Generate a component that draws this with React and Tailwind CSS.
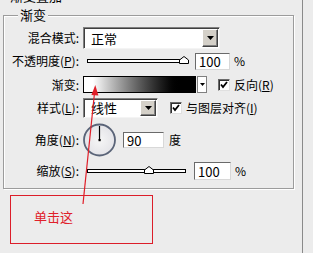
import React from "react";

function DropBtn({ w = "w-[16px]" }) {
  return (
    <div className={`${w} h-full bg-[#d4d0c8] border border-t-white border-l-white border-r-[#404040] border-b-[#404040] shadow-[inset_-1px_-1px_0_#808080] flex items-center justify-center`}>
      <svg width="7" height="4" viewBox="0 0 7 4"><polygon points="0,0 7,0 3.5,4" fill="#000" /></svg>
    </div>
  );
}

function Select({ w, h, text }) {
  return (
    <div className={`${w} ${h} bg-white border border-t-[#808080] border-l-[#808080] border-r-[#f4f4f4] border-b-[#f4f4f4] shadow-[inset_1px_1px_0_#404040] flex items-stretch p-[1px]`}>
      <div className="flex-1 pl-[6px] flex items-center leading-none text-[13px]">{text}</div>
      <DropBtn />
    </div>
  );
}

function Input({ w, h, text }) {
  return (
    <div className={`${w} ${h} bg-white border border-t-[#6a6a6a] border-l-[#6a6a6a] border-r-[#d8d8d8] border-b-[#d8d8d8] flex items-center pl-[3px] leading-none text-[13px]`}>
      {text}
    </div>
  );
}

function Slider({ thumb }) {
  return (
    <div className="relative w-[104px] h-[16px] flex items-center">
      <div className="ml-[4px] w-[99px] h-[4px] border border-black bg-white" />
      <svg className="absolute top-[3px]" style={{ left: thumb }} width="10" height="8" viewBox="0 0 10 8">
        <polygon points="0.5,7.5 0.5,4 5,0.5 9.5,4 9.5,7.5" fill="#fff" stroke="#000" strokeWidth="1" />
      </svg>
    </div>
  );
}

function Check() {
  return (
    <div className="w-[12px] h-[12px] bg-white border border-t-[#6a6a6a] border-l-[#6a6a6a] border-r-[#e0e0e0] border-b-[#e0e0e0] shadow-[inset_1px_1px_0_#303030] flex items-center justify-center">
      <svg width="8" height="8" viewBox="0 0 8 8"><polyline points="1,3.5 3,6 7,1" fill="none" stroke="#000" strokeWidth="1.8" /></svg>
    </div>
  );
}

function Label({ children }) {
  return <div className="w-[75px] text-right whitespace-nowrap leading-none text-[12px]">{children}</div>;
}

export default function App() {
  return (
    <div className="w-[313px] h-[253px] bg-[#ececec] relative overflow-hidden font-['SimSun','Noto_Sans_CJK_SC',sans-serif] text-black">
      <div className="w-[303px] h-full border-r border-[#8a8a8a] flex flex-col">
        <div className="ml-[10px] -mt-[10px] h-[12px] leading-[12px] text-[13px]">渐变叠加</div>
        <div className="relative mt-[13px] ml-[3px] w-[291px] h-[174px] border border-[#9c9c9c] shadow-[inset_1px_1px_0_#fff,1px_1px_0_#fff] pt-[11px]">
          <span className="absolute left-[14px] top-[-9px] px-[2px] bg-[#ececec] text-[13px] leading-[16px]">渐变</span>

          <div className="flex items-center h-[22px]">
            <Label>混合模式:</Label>
            <div className="ml-[4px]"><Select w="w-[137px]" h="h-[22px]" text="正常" /></div>
          </div>

          <div className="flex items-center h-[24px]">
            <Label>不透明度(<span className="underline">P</span>):</Label>
            <div className="ml-[4px]"><Slider thumb="96px" /></div>
            <div className="ml-[8px]"><Input w="w-[35px]" h="h-[17px]" text="100" /></div>
            <div className="ml-[4px] text-[12px] leading-none">%</div>
          </div>

          <div className="flex items-center h-[23px]">
            <Label>渐变:</Label>
            <div className="ml-[4px] flex items-center">
              <div className="w-[113px] h-[17px] border border-black bg-linear-to-r from-white from-[8%] to-black to-[88%]" />
              <div className="ml-[1px] w-[10px] h-[17px] border border-[#808080] bg-white flex items-center justify-center">
                <svg width="5" height="3" viewBox="0 0 5 3"><polygon points="0,0 5,0 2.5,3" fill="#000" /></svg>
              </div>
            </div>
            <div className="ml-[11px]"><Check /></div>
            <div className="ml-[4px] text-[12px] leading-none">反向(<span className="underline">R</span>)</div>
          </div>

          <div className="flex items-center h-[23px]">
            <Label>样式(<span className="underline">L</span>):</Label>
            <div className="ml-[4px]"><Select w="w-[75px]" h="h-[20px]" text="线性" /></div>
            <div className="ml-[12px]"><Check /></div>
            <div className="ml-[4px] text-[12px] leading-none">与图层对齐(<span className="underline">I</span>)</div>
          </div>

          <div className="flex items-center h-[42px]">
            <Label>角度(<span className="underline">N</span>):</Label>
            <svg className="ml-[4px]" width="34" height="34" viewBox="0 0 34 34">
              <defs>
                <radialGradient id="cg" cx="50%" cy="50%" r="50%">
                  <stop offset="0%" stopColor="#f6f6f6" />
                  <stop offset="100%" stopColor="#e4e4e8" />
                </radialGradient>
              </defs>
              <circle cx="16.5" cy="17" r="15.5" fill="url(#cg)" stroke="#5a6478" strokeWidth="1.8" />
              <line x1="16.5" y1="17" x2="16.5" y2="3" stroke="#000" strokeWidth="1.2" />
              <rect x="15.5" y="16" width="2.2" height="2.2" fill="#000" />
            </svg>
            <div className="ml-[6px]"><Input w="w-[41px]" h="h-[16px]" text="90" /></div>
            <div className="ml-[5px] text-[12px] leading-none">度</div>
          </div>

          <div className="flex items-center h-[20px]">
            <Label>缩放(<span className="underline">S</span>):</Label>
            <div className="ml-[4px]"><Slider thumb="61px" /></div>
            <div className="ml-[7px]"><Input w="w-[37px]" h="h-[18px]" text="100" /></div>
            <div className="ml-[4px] text-[12px] leading-none">%</div>
          </div>
        </div>
      </div>

      <div className="absolute left-[10px] top-[195px] w-[143px] h-[49px] border border-[#dc1e2a]">
        <div className="ml-[23px] mt-[14px] text-[13px] leading-none text-[#e0202a]">单击这</div>
      </div>

      <svg className="absolute left-0 top-0 pointer-events-none" width="313" height="253" viewBox="0 0 313 253">
        <line x1="83" y1="204" x2="94.6" y2="92" stroke="#e01e28" strokeWidth="1.2" />
        <polygon points="95.3,85 91.4,95 98.4,95.6" fill="#e01e28" />
      </svg>
    </div>
  );
}
